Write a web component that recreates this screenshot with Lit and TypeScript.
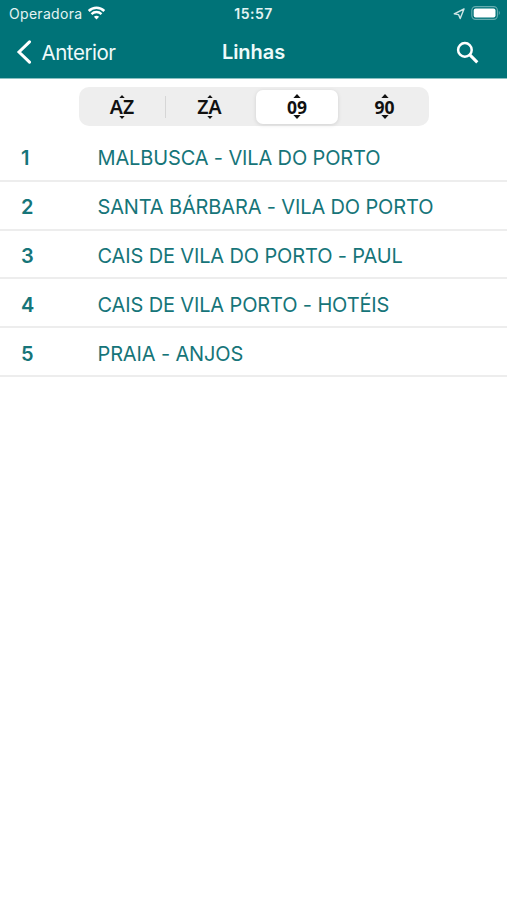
import { LitElement, html, css, svg } from "lit";
import { customElement, property, state } from "lit/decorators.js";
import { classMap } from "lit/directives/class-map.js";

interface Line {
  id: number;
  name: string;
}

const LINES: Line[] = [
  { id: 1, name: "MALBUSCA - VILA DO PORTO" },
  { id: 2, name: "SANTA BÁRBARA - VILA DO PORTO" },
  { id: 3, name: "CAIS DE VILA DO PORTO - PAUL" },
  { id: 4, name: "CAIS DE VILA PORTO - HOTÉIS" },
  { id: 5, name: "PRAIA - ANJOS" },
];

const wifi = svg`
  <path d="M1.2 5 A11.2 11.2 0 0 1 16.8 5" fill="none" stroke="#fff" stroke-width="2.5"/>
  <path d="M4 8.1 A7 7 0 0 1 14 8.1" fill="none" stroke="#fff" stroke-width="2.3"/>
  <path d="M6.4 10.8 A4 4 0 0 1 11.6 10.8 L9 13.6 Z" fill="#fff"/>`;

@customElement("status-bar")
export class StatusBar extends LitElement {
  static styles = css`
    :host {
      display: grid;
      grid-template-columns: 1fr auto 1fr;
      align-items: center;
      height: 27px;
      color: #e4f3f3;
      font-size: 14px;
    }
    .left {
      display: flex;
      align-items: center;
      gap: 5px;
      padding-left: 9px;
      letter-spacing: 0.3px;
    }
    .time {
      font-weight: 600;
      letter-spacing: 0.45px;
    }
    .right {
      display: flex;
      align-items: center;
      justify-content: flex-end;
      gap: 6px;
      padding-right: 6px;
    }
    svg {
      display: block;
    }
    .wifi,
    .battery {
      margin-top: -1px;
    }
  `;

  render() {
    return html`
      <div class="left">
        <span>Operadora</span>
        <svg class="wifi" width="19" height="14" viewBox="0 0 18 14">${wifi}</svg>
      </div>
      <div class="time">15:57</div>
      <div class="right">
        <svg width="12" height="12" viewBox="0 0 12 12">
          <path d="M11 1 L1.2 5.8 L5.5 6.6 L7.2 10.6 Z" fill="none" stroke="#cfe6e6" stroke-width="1.4" stroke-linejoin="round"/>
        </svg>
        <svg class="battery" width="30" height="14" viewBox="0 0 30 14">
          <rect x="0.8" y="0.6" width="25.6" height="12.8" rx="3.8" fill="none" stroke="#66adb0" stroke-width="1.1"/>
          <rect x="2.7" y="2.5" width="21.8" height="9" rx="2" fill="#fff"/>
          <path d="M27.8 4.8 Q29.8 7 27.8 9.2 Z" fill="#66adb0"/>
        </svg>
      </div>
    `;
  }
}

@customElement("nav-bar")
export class NavBar extends LitElement {
  @property() heading = "";
  @property() back = "";

  static styles = css`
    :host {
      display: grid;
      grid-template-columns: 1fr auto 1fr;
      align-items: center;
      height: 50px;
      color: #eefafa;
      font-size: 20.5px;
    }
    .back {
      display: flex;
      align-items: center;
      gap: 9.5px;
      padding-left: 16px;
      letter-spacing: -0.45px;
    }
    .title {
      font-weight: 600;
      font-size: 20px;
      letter-spacing: -0.05px;
    }
    .search {
      display: flex;
      justify-content: flex-end;
      padding-right: 28px;
    }
    svg {
      display: block;
    }
  `;

  render() {
    return html`
      <div class="back">
        <svg width="16" height="24" viewBox="0 0 16 24">
          <path d="M13.5 1.8 L3 12 L13.5 22.2" fill="none" stroke="#fff" stroke-width="3" stroke-linecap="round" stroke-linejoin="miter"/>
        </svg>
        <span>${this.back}</span>
      </div>
      <div class="title">${this.heading}</div>
      <div class="search">
        <svg width="23" height="23" viewBox="0 0 23 23">
          <circle cx="8.9" cy="8.9" r="6.8" fill="none" stroke="#fff" stroke-width="2.5"/>
          <path d="M13.6 13.6 L21.3 21.3" fill="none" stroke="#fff" stroke-width="3.1"/>
        </svg>
      </div>
    `;
  }
}

@customElement("sort-switch")
export class SortSwitch extends LitElement {
  @state() selected = 2;

  static styles = css`
    :host {
      display: grid;
      grid-template-columns: repeat(4, 1fr);
      width: 350px;
      height: 39px;
      border-radius: 10px;
      background: #eeeeee;
      color: #111;
    }
    .option {
      display: flex;
      flex-direction: column;
      align-items: center;
      justify-content: center;
      box-sizing: border-box;
      margin: 3px 3.5px 2px 2px;
      padding-bottom: 1px;
      border-radius: 7px;
      position: relative;
    }
    .option.divided::after {
      content: "";
      position: absolute;
      right: -3px;
      top: 6px;
      bottom: 6px;
      width: 1px;
      background: #d6d6d6;
    }
    .option.selected {
      background: #fff;
      box-shadow: 0 1px 4px rgba(0, 0, 0, 0.12);
    }
    .text {
      font: 600 19.5px/14px "Noto Sans", sans-serif;
      height: 14px;
      margin: 2px 0;
    }
    .text.digits {
      font: 700 17.5px/14px "Noto Sans", sans-serif;
      margin: 1.5px 0;
    }
    svg {
      display: block;
    }
  `;

  render() {
    return ["AZ", "ZA", "09", "90"].map((label, i) => {
      const digits = i > 1;
      const h = digits ? 4 : 3;
      const w = digits ? 8 : 6;
      return html`
        <div
          class=${classMap({ option: true, selected: i === this.selected, divided: i === 0 })}
          @click=${() => (this.selected = i)}
        >
          <svg width=${w} height=${h} viewBox="0 0 8 4" preserveAspectRatio="none">
            <path d="M4 0 L7.6 4 H0.4 Z" fill="#111"/>
          </svg>
          <span class=${classMap({ text: true, digits })}>${label}</span>
          <svg width=${w} height=${h} viewBox="0 0 8 4" preserveAspectRatio="none">
            <path d="M4 4 L7.6 0 H0.4 Z" fill="#111"/>
          </svg>
        </div>
      `;
    });
  }
}

@customElement("line-row")
export class LineRow extends LitElement {
  @property({ attribute: false }) line!: Line;

  static styles = css`
    :host {
      display: flex;
      align-items: center;
      box-sizing: border-box;
      height: 48.9px;
      padding: 3.4px 0 0 21px;
      border-bottom: 2px solid #ededed;
      color: #167579;
      font-size: 20px;
      white-space: nowrap;
    }
    .number {
      width: 76.5px;
      font-weight: 600;
    }
    .name {
      letter-spacing: -0.14px;
    }
  `;

  render() {
    return html`
      <span class="number">${this.line.id}</span>
      <span class="name">${this.line.name}</span>
    `;
  }
}

@customElement("app-root")
export class AppRoot extends LitElement {
  static styles = css`
    :host {
      display: flex;
      flex-direction: column;
      height: 900px;
      overflow: hidden;
      background: #fff;
      font-family: Inter, "Liberation Sans", sans-serif;
    }
    header {
      height: 78px;
      background: #007378;
      border-bottom: 1px solid #8ac0c2;
    }
    .toolbar {
      display: flex;
      padding: 8px 0 6.8px 79px;
    }
  `;

  render() {
    return html`
      <header>
        <status-bar></status-bar>
        <nav-bar heading="Linhas" back="Anterior"></nav-bar>
      </header>
      <div class="toolbar"><sort-switch></sort-switch></div>
      <main>${LINES.map((line) => html`<line-row .line=${line}></line-row>`)}</main>
    `;
  }
}
